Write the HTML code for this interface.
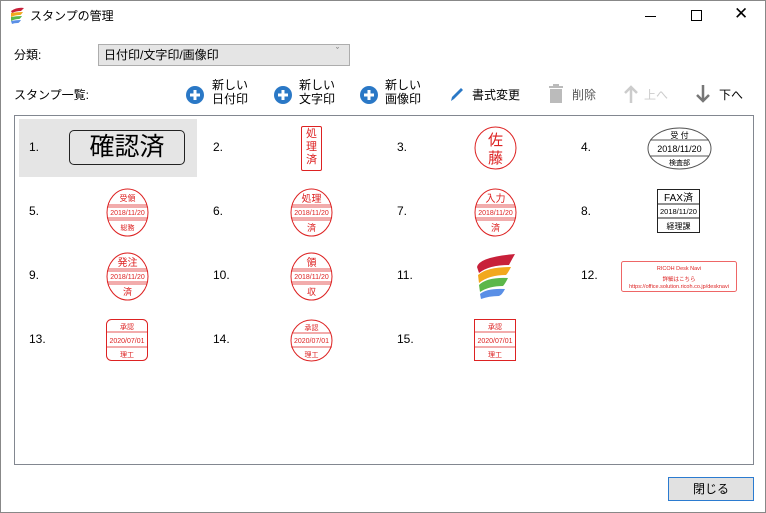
<!DOCTYPE html>
<html><head><meta charset="utf-8"><style>
body{margin:0;width:766px;height:513px;overflow:hidden;background:#fff;font-family:"Liberation Sans","Noto Sans CJK JP",sans-serif;font-size:12px;color:#000}
.win{position:absolute;left:0;top:0;width:764px;height:511px;border:1px solid #888;background:#fff}
.a{position:absolute}
.n{position:absolute;font-size:12px}
svg text{font-family:"Liberation Sans","Noto Sans CJK JP",sans-serif}
</style></head><body>
<div class="win">
<svg class="a" style="left:8px;top:6px" width="16" height="17" viewBox="0 0 16 17">
<path d="M2 4 Q8 0 15 1 Q13 3 12 4 Q7 4 3 6Z" fill="#c8203a"/>
<path d="M2 6 Q8 5 14 5 Q12 8 11 8 Q6 8 2 10Z" fill="#f2a81d"/>
<path d="M2 10 Q8 9 13 9 Q11 12 10 12 Q6 12 2 14Z" fill="#5bb74a"/>
<path d="M2 14 Q7 13 12 13 Q10 16 9 16 Q5 16 3 17Z" fill="#5a8fe6"/></svg>
<div class="a" style="left:29px;top:6px;font-size:12px">スタンプの管理</div>
<div class="a" style="left:644px;top:15px;width:11px;height:1px;background:#000"></div>
<div class="a" style="left:690px;top:9px;width:9px;height:9px;border:1px solid #000"></div>
<div class="a" style="left:733px;top:3px;font-size:17px;font-weight:300">✕</div>

<div class="a" style="left:13px;top:45px;font-size:12px">分類:</div>
<div class="a" style="left:97px;top:43px;width:250px;height:20px;border:1px solid #adadad;background:#e5e5e5"></div>
<div class="a" style="left:103px;top:45px;font-size:12px">日付印/文字印/画像印</div>
<div class="a" style="left:335px;top:45px;font-size:9px;color:#555">ˇ</div>

<div class="a" style="left:13px;top:85px;font-size:12px">スタンプ一覧:</div>
<svg class="a" style="left:184px;top:84px" width="20" height="20"><circle cx="10" cy="10" r="9" fill="#2a78c6"/><path d="M10 5v10M5 10h10" stroke="#fff" stroke-width="3"/></svg>
<div class="a" style="left:211px;top:77px;font-size:12px;line-height:14px">新しい<br>日付印</div>
<svg class="a" style="left:272px;top:84px" width="20" height="20"><circle cx="10" cy="10" r="9" fill="#2a78c6"/><path d="M10 5v10M5 10h10" stroke="#fff" stroke-width="3"/></svg>
<div class="a" style="left:298px;top:77px;font-size:12px;line-height:14px">新しい<br>文字印</div>
<svg class="a" style="left:358px;top:84px" width="20" height="20"><circle cx="10" cy="10" r="9" fill="#2a78c6"/><path d="M10 5v10M5 10h10" stroke="#fff" stroke-width="3"/></svg>
<div class="a" style="left:384px;top:77px;font-size:12px;line-height:14px">新しい<br>画像印</div>
<svg class="a" style="left:447px;top:84px" width="18" height="18"><path d="M3 16 L4 12 L13 3 L15 5 L6 14Z" fill="#2a78c6"/></svg>
<div class="a" style="left:471px;top:85px;font-size:12px">書式変更</div>
<svg class="a" style="left:546px;top:83px" width="18" height="20"><rect x="2" y="2" width="14" height="2" fill="#bbb"/><rect x="6" y="0" width="6" height="2" fill="#bbb"/><rect x="3" y="5" width="12" height="14" fill="#bbb"/></svg>
<div class="a" style="left:571px;top:85px;font-size:12px;color:#555">削除</div>
<svg class="a" style="left:622px;top:84px" width="16" height="18"><path d="M8 2v16M2 8l6-6 6 6" stroke="#ccc" stroke-width="2.5" fill="none"/></svg>
<div class="a" style="left:643px;top:85px;font-size:12px;color:#ccc">上へ</div>
<svg class="a" style="left:694px;top:84px" width="16" height="18"><path d="M8 0v16M2 10l6 6 6-6" stroke="#777" stroke-width="2.5" fill="none"/></svg>
<div class="a" style="left:718px;top:85px;font-size:12px">下へ</div>

<div class="a" style="left:13px;top:114px;width:738px;height:348px;border:1px solid #828790"></div>
<div class="a" style="left:18px;top:118px;width:178px;height:58px;background:#e5e5e5"></div>

<div class="n" style="left:28px;top:139px">1.</div>
<div class="n" style="left:212px;top:139px">2.</div>
<div class="n" style="left:396px;top:139px">3.</div>
<div class="n" style="left:580px;top:139px">4.</div>
<div class="n" style="left:28px;top:203px">5.</div>
<div class="n" style="left:212px;top:203px">6.</div>
<div class="n" style="left:396px;top:203px">7.</div>
<div class="n" style="left:580px;top:203px">8.</div>
<div class="n" style="left:28px;top:267px">9.</div>
<div class="n" style="left:212px;top:267px">10.</div>
<div class="n" style="left:396px;top:267px">11.</div>
<div class="n" style="left:580px;top:267px">12.</div>
<div class="n" style="left:28px;top:331px">13.</div>
<div class="n" style="left:212px;top:331px">14.</div>
<div class="n" style="left:396px;top:331px">15.</div>

<div class="a" style="left:68px;top:129px;width:114px;height:33px;border:1px solid #222;border-radius:5px;font-size:25px;line-height:33px;text-align:center">確認済</div>
<div class="a" style="left:300px;top:125px;width:19px;height:42px;border:1px solid #d22;border-radius:2px;color:#d22;font-size:11px;line-height:13px;text-align:center;padding-top:1px">処<br>理<br>済</div>
<svg class="a" style="left:473px;top:125px" width="43" height="44"><ellipse cx="21.5" cy="22" rx="20.5" ry="21" fill="none" stroke="#d22"/><text x="21.5" y="19" font-size="15" fill="#d22" text-anchor="middle">佐</text><text x="21.5" y="37" font-size="15" fill="#d22" text-anchor="middle">藤</text></svg>
<svg class="a" style="left:646px;top:126px" width="65" height="43"><ellipse cx="32.5" cy="21.5" rx="31.5" ry="20.5" fill="none" stroke="#555"/><path d="M3 13h59M3 29h59" stroke="#555"/><text x="32.5" y="11" font-size="8" text-anchor="middle">受 付</text><text x="32.5" y="25" font-size="9" text-anchor="middle">2018/11/20</text><text x="32.5" y="38" font-size="7" text-anchor="middle">検査部</text></svg>

<svg class="a" style="left:105px;top:187px" width="43" height="49"><ellipse cx="21.5" cy="24.5" rx="20.5" ry="23.5" fill="none" stroke="#d22"/><path d="M2 17h39M1 19h41M1 30h41M2 32h39" stroke="#d22" stroke-width=".7"/><text x="21.5" y="13" font-size="8" fill="#d22" text-anchor="middle">受領</text><text x="21.5" y="27" font-size="7" fill="#d22" text-anchor="middle">2018/11/20</text><text x="21.5" y="42" font-size="7" fill="#d22" text-anchor="middle">総務</text></svg>
<svg class="a" style="left:289px;top:187px" width="43" height="49"><ellipse cx="21.5" cy="24.5" rx="20.5" ry="23.5" fill="none" stroke="#d22"/><path d="M2 17h39M1 19h41M1 30h41M2 32h39" stroke="#d22" stroke-width=".7"/><text x="21.5" y="14" font-size="10" fill="#d22" text-anchor="middle">処理</text><text x="21.5" y="27" font-size="7" fill="#d22" text-anchor="middle">2018/11/20</text><text x="21.5" y="43" font-size="9" fill="#d22" text-anchor="middle">済</text></svg>
<svg class="a" style="left:473px;top:187px" width="43" height="49"><ellipse cx="21.5" cy="24.5" rx="20.5" ry="23.5" fill="none" stroke="#d22"/><path d="M2 17h39M1 19h41M1 30h41M2 32h39" stroke="#d22" stroke-width=".7"/><text x="21.5" y="14" font-size="10" fill="#d22" text-anchor="middle">入力</text><text x="21.5" y="27" font-size="7" fill="#d22" text-anchor="middle">2018/11/20</text><text x="21.5" y="43" font-size="9" fill="#d22" text-anchor="middle">済</text></svg>
<svg class="a" style="left:656px;top:188px" width="44" height="45"><rect x=".5" y=".5" width="42" height="43" fill="none" stroke="#222"/><path d="M0 15h43M0 29h43" stroke="#222"/><text x="21.5" y="12" font-size="10" text-anchor="middle">FAX済</text><text x="21.5" y="25" font-size="7.5" text-anchor="middle">2018/11/20</text><text x="21.5" y="40" font-size="8" text-anchor="middle">経理課</text></svg>

<svg class="a" style="left:105px;top:251px" width="43" height="49"><ellipse cx="21.5" cy="24.5" rx="20.5" ry="23.5" fill="none" stroke="#d22"/><path d="M2 17h39M1 19h41M1 30h41M2 32h39" stroke="#d22" stroke-width=".7"/><text x="21.5" y="14" font-size="10" fill="#d22" text-anchor="middle">発注</text><text x="21.5" y="27" font-size="7" fill="#d22" text-anchor="middle">2018/11/20</text><text x="21.5" y="43" font-size="9" fill="#d22" text-anchor="middle">済</text></svg>
<svg class="a" style="left:289px;top:251px" width="43" height="49"><ellipse cx="21.5" cy="24.5" rx="20.5" ry="23.5" fill="none" stroke="#d22"/><path d="M2 17h39M1 19h41M1 30h41M2 32h39" stroke="#d22" stroke-width=".7"/><text x="21.5" y="14" font-size="10" fill="#d22" text-anchor="middle">領</text><text x="21.5" y="27" font-size="7" fill="#d22" text-anchor="middle">2018/11/20</text><text x="21.5" y="43" font-size="9" fill="#d22" text-anchor="middle">収</text></svg>
<svg class="a" style="left:474px;top:252px" width="42" height="46" viewBox="0 0 42 46">
<path d="M2 14 Q4 4 40 1 Q36 8 34 12 Q14 12 4 20Z" fill="#c8203a"/>
<path d="M3 22 Q12 14 36 14 Q33 20 31 22 Q14 22 4 30Z" fill="#f2a81d"/>
<path d="M4 32 Q12 24 33 25 Q30 31 28 33 Q14 33 5 39Z" fill="#5bb74a"/>
<path d="M5 41 Q12 35 30 36 Q27 42 24 43 Q14 43 6 46Z" fill="#5a8fe6"/></svg>
<svg class="a" style="left:620px;top:260px" width="117" height="32"><rect x=".5" y=".5" width="115" height="30" rx="2" fill="none" stroke="#e66"/><text x="58" y="9" font-size="5.5" fill="#d22" text-anchor="middle">RICOH Desk Navi</text><text x="58" y="20" font-size="5.5" fill="#d22" text-anchor="middle">詳細はこちら</text><text x="58" y="27" font-size="5.5" fill="#d22" text-anchor="middle">https://office.solution.ricoh.co.jp/desknavi</text></svg>

<svg class="a" style="left:105px;top:318px" width="43" height="43"><rect x=".5" y=".5" width="41" height="41" rx="5" fill="none" stroke="#d22"/><path d="M0 13h42M0 28h42" stroke="#d22" stroke-width=".7"/><text x="21" y="10" font-size="7" fill="#d22" text-anchor="middle">承認</text><text x="21" y="24" font-size="7" fill="#d22" text-anchor="middle">2020/07/01</text><text x="21" y="38" font-size="7" fill="#d22" text-anchor="middle">理工</text></svg>
<svg class="a" style="left:289px;top:318px" width="43" height="43"><ellipse cx="21.5" cy="21.5" rx="20.5" ry="20.5" fill="none" stroke="#d22"/><path d="M2 14h39M1 28h41" stroke="#d22" stroke-width=".7"/><text x="21.5" y="11" font-size="7" fill="#d22" text-anchor="middle">承認</text><text x="21.5" y="24" font-size="7" fill="#d22" text-anchor="middle">2020/07/01</text><text x="21.5" y="38" font-size="7" fill="#d22" text-anchor="middle">理工</text></svg>
<svg class="a" style="left:473px;top:318px" width="43" height="43"><rect x=".5" y=".5" width="41" height="41" fill="none" stroke="#d22"/><path d="M0 13h42M0 28h42" stroke="#d22" stroke-width=".7"/><text x="21" y="10" font-size="7" fill="#d22" text-anchor="middle">承認</text><text x="21" y="24" font-size="7" fill="#d22" text-anchor="middle">2020/07/01</text><text x="21" y="38" font-size="7" fill="#d22" text-anchor="middle">理工</text></svg>

<div class="a" style="left:667px;top:476px;width:84px;height:22px;border:1px solid #2b7bd0;background:#e1e1e1;text-align:center;line-height:22px;font-size:12px">閉じる</div>
</div>
</body></html>
